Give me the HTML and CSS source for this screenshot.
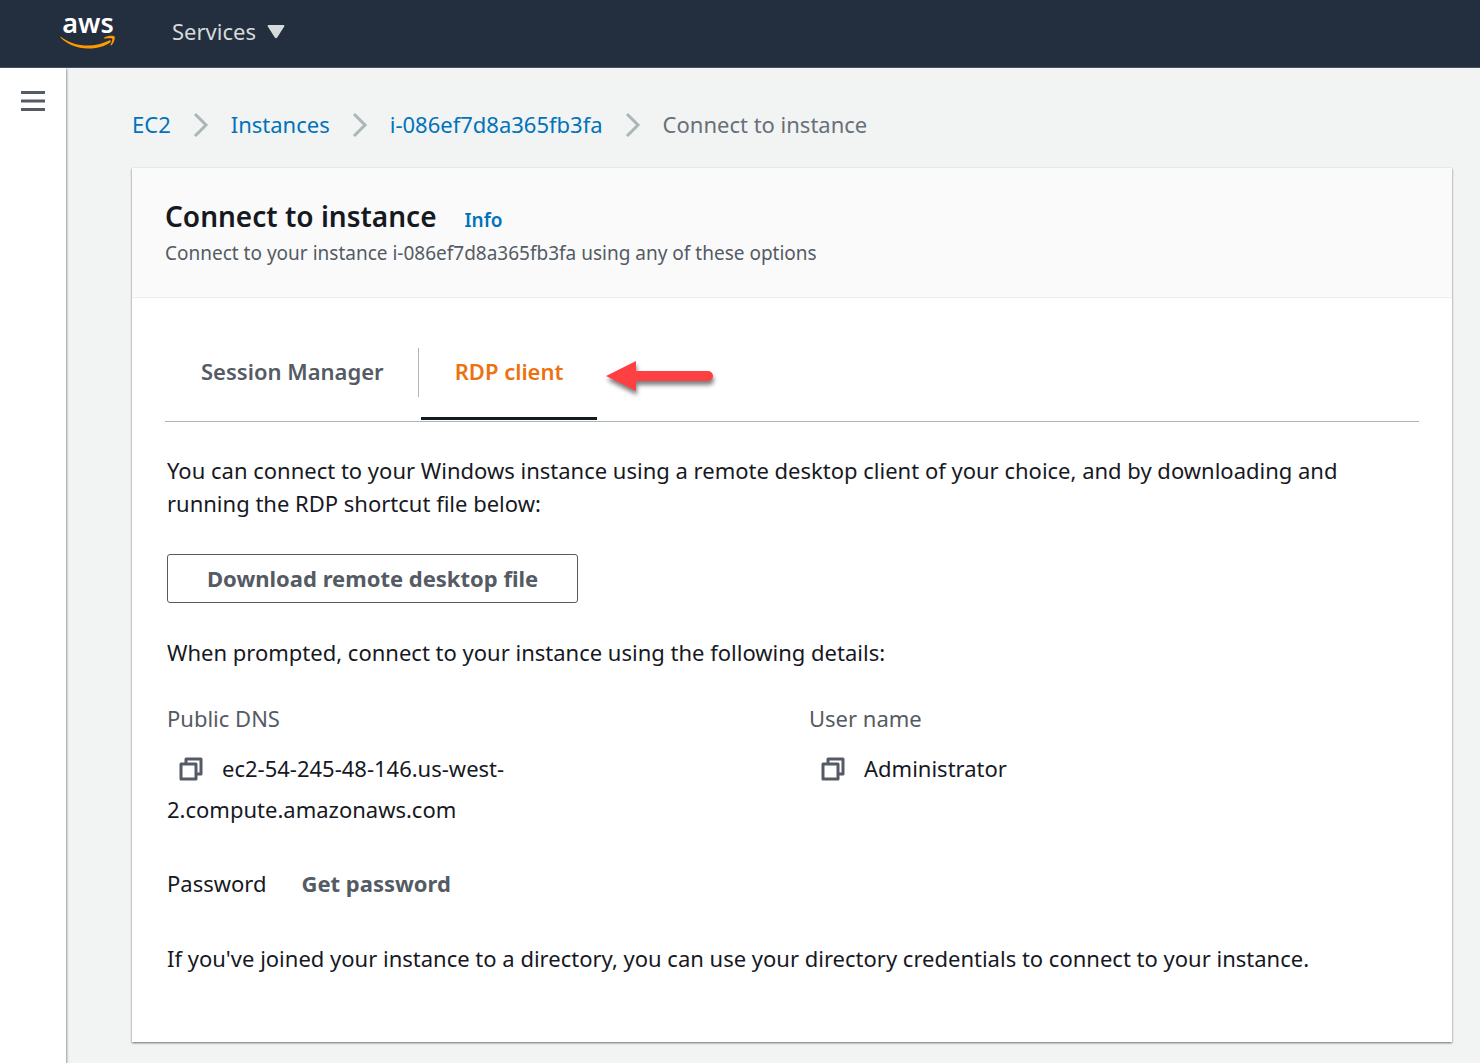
FILE: index.html
```html
<!DOCTYPE html>
<html lang="en">
<head>
<meta charset="utf-8">
<meta name="viewport" content="width=device-width, initial-scale=1">
<title>Connect to instance</title>
<link rel="stylesheet" href="styles.css">
</head>
<body>
<header class="topbar">
  <a class="logo" href="#" aria-label="aws">
    <span class="logo-text">aws</span>
    <svg class="logo-smile" width="56" height="14" viewBox="0 0 56 14" aria-hidden="true">
      <path d="M1 2C9 8 18 10.5 28 10.500C35 10.500 43 8.500 49 5.500C50.500 4.800 51.500 6 50.500 7.200C45 11.500 36 13.500 28 13.500C17 13.500 7 9.500 .5 2.600C0 2 .4 1.500 1 2Z"/>
      <path d="M44 2.800C48 .3 53.500 .6 54.500 1.500C55.500 2.800 54 8 51.500 10.300C50.800 10.800 50.300 10.500 50.600 9.800C51.500 7.500 52.800 4.500 52.200 3.700C51.500 2.900 47.500 3.200 44.600 3.600C43.800 3.700 43.500 3.200 44 2.800Z"/>
    </svg>
  </a>
  <button class="services" type="button">Services
    <svg width="18" height="14" viewBox="0 0 18 14" aria-hidden="true"><path d="M1.500 0H16.500Q18 0 17.200 1.500L10.200 12.500Q9 14 7.800 12.500L.8 1.500Q0 0 1.500 0Z"/></svg>
  </button>
</header>
<div class="shell">
  <aside class="rail">
    <button class="menu" type="button" aria-label="Open navigation">
      <svg width="24" height="22" viewBox="0 0 24 22" aria-hidden="true"><path d="M0 2.500H24M0 11H24M0 19.500H24"/></svg>
    </button>
  </aside>
  <main class="main">
    <nav class="crumbs" aria-label="Breadcrumb">
      <a href="#">EC2</a>
      <svg width="16" height="26" viewBox="0 0 16 26" aria-hidden="true"><path d="M2 2L13 13L2 24"/></svg>
      <a href="#">Instances</a>
      <svg width="16" height="26" viewBox="0 0 16 26" aria-hidden="true"><path d="M2 2L13 13L2 24"/></svg>
      <a href="#">i-086ef7d8a365fb3fa</a>
      <svg width="16" height="26" viewBox="0 0 16 26" aria-hidden="true"><path d="M2 2L13 13L2 24"/></svg>
      <span>Connect to instance</span>
    </nav>
    <section class="card">
      <div class="card-head">
        <div class="title-row">
          <h1>Connect to instance</h1>
          <a class="info" href="#">Info</a>
        </div>
        <p class="subtitle">Connect to your instance i-086ef7d8a365fb3fa using any of these options</p>
      </div>
      <div class="card-body">
        <div class="tabs" role="tablist">
          <button class="tab" type="button" role="tab" aria-selected="false"><span>Session Manager</span></button>
          <button class="tab tab-active" type="button" role="tab" aria-selected="true"><span>RDP client</span></button>
          <svg class="arrow" width="116" height="44" viewBox="0 0 116 44" aria-hidden="true"><path d="M4 20L34 5V15H106A5 5 0 0 1 106 25H34V35Z"/></svg>
        </div>
        <div class="panel" role="tabpanel">
          <p>You can connect to your Windows instance using a remote desktop client of your choice, and by downloading and running the RDP shortcut file below:</p>
          <button class="download" type="button">Download remote desktop file</button>
          <p>When prompted, connect to your instance using the following details:</p>
          <dl class="details">
            <div>
              <dt>Public DNS</dt>
              <dd><button class="copy" type="button" aria-label="Copy public DNS"><svg width="24" height="24" viewBox="0 0 24 24" aria-hidden="true"><path d="M2 7H17V22H2ZM7 7V2H22V17H17"/></svg></button>ec2-54-245-48-146.us-west-<wbr>2.compute.amazonaws.com</dd>
            </div>
            <div>
              <dt>User name</dt>
              <dd><button class="copy" type="button" aria-label="Copy user name"><svg width="24" height="24" viewBox="0 0 24 24" aria-hidden="true"><path d="M2 7H17V22H2ZM7 7V2H22V17H17"/></svg></button>Administrator</dd>
            </div>
          </dl>
          <div class="password">
            <span>Password</span>
            <button class="get-password" type="button">Get password</button>
          </div>
          <p>If you've joined your instance to a directory, you can use your directory credentials to connect to your instance.</p>
        </div>
      </div>
    </section>
  </main>
</div>
</body>
</html>
```
FILE: styles.css
```css
* {
  box-sizing: border-box;
}

body {
  margin: 0;
  min-height: 100vh;
  display: flex;
  flex-direction: column;
  background: #f2f3f3;
  color: #16191f;
  font: 22px/33px "Noto Sans", "Open Sans", sans-serif;
}

h1, p, dl, dd {
  margin: 0;
}

button {
  padding: 0;
  border: 0;
  background: none;
  color: #545b64;
  font: inherit;
  cursor: pointer;
}

a {
  color: #0073bb;
  text-decoration: none;
}

.topbar {
  height: 68px;
  padding: 0 60px 4px;
  display: flex;
  align-items: center;
  gap: 56px;
  background: #232f3e;
  border-bottom: 1px solid #48535f;
}

.logo {
  padding-bottom: 4px;
  display: flex;
  flex-direction: column;
  align-items: center;
}

.logo-text {
  color: #fff;
  font-size: 27px;
  font-weight: 600;
  line-height: 24px;
}

.logo-smile {
  fill: #f90;
}

.services {
  display: flex;
  align-items: center;
  gap: 11px;
  color: #d5dbdb;
}

.services svg {
  fill: #d5dbdb;
}

.shell {
  flex: 1;
  display: flex;
}

.rail {
  flex: 0 0 66px;
  padding: 19px 21px;
  background: #fff;
  box-shadow: 1px 1px 2px rgba(0, 28, 36, 0.4);
}

.menu svg {
  display: block;
  stroke: #545b64;
  stroke-width: 3;
}

.main {
  flex: 1;
  min-width: 0;
  padding: 40px 28px 22px 66px;
}

.crumbs {
  margin-bottom: 27px;
  display: flex;
  flex-wrap: wrap;
  align-items: center;
  gap: 22px;
  color: #687078;
}

.crumbs svg {
  fill: none;
  stroke: #aab7b8;
  stroke-width: 3;
}

.card {
  background: #fff;
  box-shadow: 0 1px 2px rgba(0, 28, 36, 0.6);
}

.card-head {
  padding: 30px 33px 27px;
  background: #fafafa;
  border-bottom: 1px solid #eaeded;
}

.title-row {
  display: flex;
  align-items: baseline;
  gap: 28px;
}

h1 {
  font-size: 28px;
  font-weight: 600;
  line-height: 36px;
}

.info {
  font-size: 19px;
  font-weight: 600;
  line-height: 33px;
}

.subtitle {
  color: #545b64;
  font-size: 19px;
}

.card-body {
  padding: 50px 33px 67px;
}

.tabs {
  padding-bottom: 1px;
  display: flex;
  align-items: flex-start;
  border-bottom: 1px solid #aab7b8;
}

.tab {
  height: 72px;
  padding-bottom: 20px;
  display: flex;
  font-weight: 600;
  border-bottom: 3px solid transparent;
}

.tab span {
  padding: 7px 34px 9px;
}

.tab:first-child span {
  padding-left: 36px;
  border-right: 1px solid #aab7b8;
}

.tab-active {
  margin-left: 2px;
  color: #ec7211;
  border-bottom-color: #16191f;
}

.arrow {
  margin: 8px 0 0 5px;
  fill: #ff4043;
  filter: drop-shadow(1px 4px 2px rgba(0, 0, 0, 0.5));
}

.panel {
  padding: 32px 2px 0;
}

.download {
  margin: 34px 0 33px;
  height: 49px;
  padding: 0 39px;
  display: block;
  border: 1px solid #545b64;
  border-radius: 3px;
  background: #fff;
  font-weight: 700;
  line-height: 45px;
}

.details {
  margin: 33px 0;
  display: grid;
  grid-template-columns: 1fr 1fr;
  gap: 34px;
}

.details dt {
  margin-bottom: 13px;
  color: #545b64;
}

.details dd {
  line-height: 41px;
}

.copy {
  margin: 0 19px 0 12px;
  line-height: 24px;
  vertical-align: -4px;
}

.copy svg {
  display: block;
  fill: none;
  stroke: #545b64;
  stroke-width: 3;
  stroke-linejoin: round;
}

.password {
  margin: 37px 0 42px;
  display: flex;
  gap: 35px;
}

.get-password {
  font-weight: 700;
}
```
